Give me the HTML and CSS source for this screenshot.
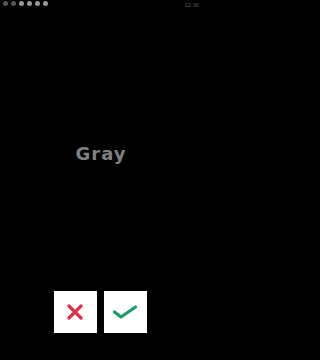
FILE: index.html
```html
<!DOCTYPE html>
<html>
<head>
<meta charset="utf-8">
<link rel="stylesheet" href="styles.css">
</head>
<body>
<div class="screen">
  <div class="status">
    <div class="dots">
      <span class="dot dim"></span>
      <span class="dot dim"></span>
      <span class="dot"></span>
      <span class="dot"></span>
      <span class="dot"></span>
      <span class="dot"></span>
    </div>
    <div class="clock">12:30</div>
  </div>
  <div class="word">Gray</div>
  <div class="actions">
    <button class="btn" aria-label="No">
      <svg width="16" height="16" viewBox="0 0 16 16"><path d="M2 2L14 14M14 2L2 14" stroke="#d8324c" stroke-width="3.2" stroke-linecap="round"/></svg>
    </button>
    <button class="btn" aria-label="Yes">
      <svg width="26" height="14" viewBox="0 0 26 14"><path d="M2.5 7L9 12L23.5 2" fill="none" stroke="#1f9a6a" stroke-width="3.2" stroke-linecap="round" stroke-linejoin="round"/></svg>
    </button>
  </div>
</div>
</body>
</html>
```
FILE: styles.css
```css
html, body {
  margin: 0;
  padding: 0;
  background: #000;
}
.screen {
  width: 201px;
  height: 360px;
  display: flex;
  flex-direction: column;
  background: #000;
  font-family: "DejaVu Sans", sans-serif;
}
.status {
  height: 9px;
  padding: 1px 2px 0 3px;
  display: flex;
  justify-content: space-between;
  align-items: flex-start;
}
.dots {
  display: flex;
  gap: 3px;
}
.dot {
  width: 5px;
  height: 5px;
  border-radius: 50%;
  background: #9a9a9a;
}
.dot.dim {
  background: #555;
}
.clock {
  font-size: 5px;
  line-height: 6px;
  color: #666;
  margin-top: 1px;
}
.word {
  margin-top: 132px;
  text-align: center;
  color: #808080;
  font-family: "DejaVu Sans", sans-serif;
  font-weight: bold;
  font-size: 18px;
  letter-spacing: 1px;
  line-height: 24px;
  padding-left: 1px;
}
.actions {
  margin-top: auto;
  margin-bottom: 27px;
  display: flex;
  justify-content: center;
  gap: 7px;
  padding-right: 1px;
}
.btn {
  width: 43px;
  height: 42px;
  border: none;
  padding: 0;
  margin: 0;
  background: #fff;
  display: flex;
  align-items: center;
  justify-content: center;
}
```
